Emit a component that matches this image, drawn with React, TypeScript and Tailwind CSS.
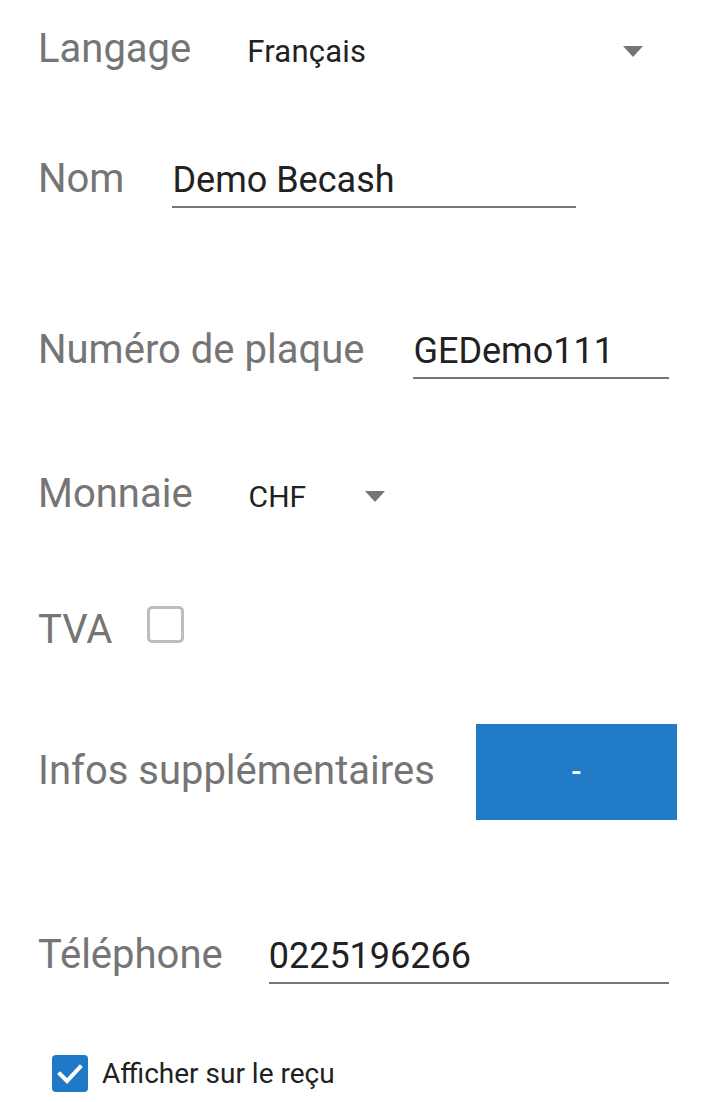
import React from "react";

const Label = ({ children, className = "" }: { children: React.ReactNode; className?: string }) => (
  <span className={`text-[40px] leading-[47px] text-[#757575] whitespace-nowrap ${className}`}>{children}</span>
);

const Caret = () => (
  <svg width="20" height="11" viewBox="0 0 20 11" className="shrink-0">
    <path d="M0 0 L20 0 L10 11 Z" fill="#757575" />
  </svg>
);

const TextInput = ({ value, width, className = "" }: { value: string; width: string; className?: string }) => (
  <div className={`${width} ${className} border-b-2 border-[#757575] pb-[5px] text-[36px] leading-[42px] text-[#212121] whitespace-nowrap`}>
    {value}
  </div>
);

export default function App() {
  return (
    <div
      className="w-[716px] h-[1102px] bg-white overflow-hidden pt-[25px] pl-[38px] pr-[39px]"
      style={{ fontFamily: "Roboto, 'Noto Sans', sans-serif" }}
    >
      {/* Langage */}
      <div className="flex items-baseline h-[130px]">
        <Label>Langage</Label>
        <div className="ml-[56px] w-[396px] flex items-center justify-between">
          <span className="text-[31px] leading-[36px] tracking-[0.2px] text-[#212121]">Français</span>
          <span className="-mt-[2px]"><Caret /></span>
        </div>
      </div>

      {/* Nom */}
      <div className="flex items-baseline h-[171px]">
        <Label>Nom</Label>
        <TextInput value="Demo Becash" width="w-[404px]" className="ml-[48px]" />
      </div>

      {/* Numéro de plaque */}
      <div className="flex items-baseline h-[144px]">
        <Label>Numéro de plaque</Label>
        <TextInput value="GEDemo111" width="w-[256px]" className="ml-[49px]" />
      </div>

      {/* Monnaie */}
      <div className="flex items-baseline h-[136px]">
        <Label>Monnaie</Label>
        <div className="ml-[56px] flex items-center">
          <span className="text-[30px] leading-[36px] text-[#212121]">CHF</span>
          <span className="ml-[59px] -mt-[1px]"><Caret /></span>
        </div>
      </div>

      {/* TVA */}
      <div className="flex items-baseline h-[118px]">
        <Label>TVA</Label>
        <div className="ml-[35px] mb-[3px] w-[37px] h-[37px] rounded-[5px] border-[3px] border-[#bdbdbd] bg-white" />
      </div>

      {/* Infos supplémentaires */}
      <div className="flex items-center h-[96px]">
        <Label className="mb-[3px]">Infos supplémentaires</Label>
        <button className="ml-[41px] w-[202px] h-[96px] bg-[#217bc6] text-white text-[30px] font-medium leading-none flex items-center justify-center">
          -
        </button>
      </div>

      {/* Téléphone */}
      <div className="flex items-baseline h-[124px] mt-[111px]">
        <Label>Téléphone</Label>
        <TextInput value="0225196266" width="w-[400px]" className="ml-[46px]" />
      </div>

      {/* Afficher sur le reçu */}
      <div className="flex items-center ml-[14px]">
        <div className="w-[36px] h-[37px] rounded-[4px] bg-[#2079c6] flex items-center justify-center">
          <svg width="36" height="37" viewBox="0 0 36 37">
            <path d="M8 19 L15 26 L28 12" fill="none" stroke="white" strokeWidth="4" strokeLinecap="square" />
          </svg>
        </div>
        <span className="ml-[14px] text-[28px] leading-[33px] text-[#212121]">Afficher sur le reçu</span>
      </div>
    </div>
  );
}
